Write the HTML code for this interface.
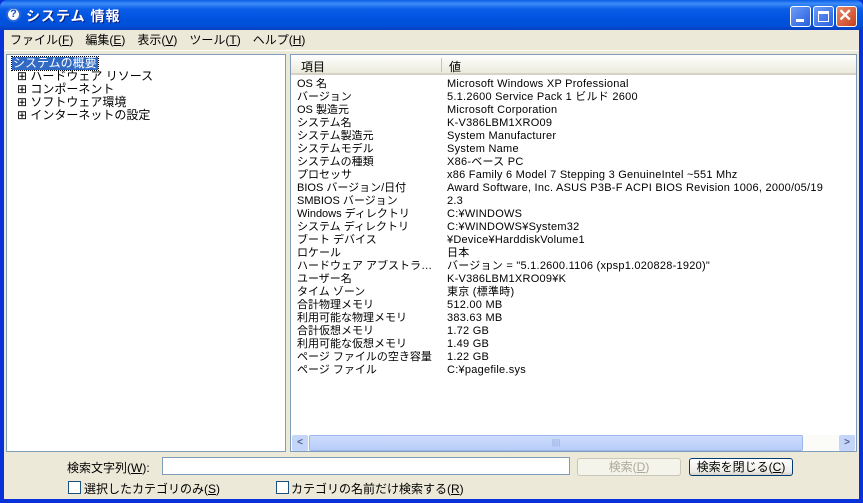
<!DOCTYPE html>
<html><head><meta charset="utf-8"><style>
*{margin:0;padding:0;box-sizing:border-box}
body{width:863px;height:503px;overflow:hidden;background:#0831d9;font-family:"Liberation Sans","Noto Sans CJK JP",sans-serif;font-size:11px;color:#000;position:relative}
.abs{position:absolute}
#title{left:0;top:0;width:863px;height:30px;background:linear-gradient(#0a5de8 0%,#3d8cf7 12%,#0a5ee8 30%,#0053e0 60%,#0050d8 85%,#0a3fc0 100%);border-radius:7px 7px 0 0}
#ttext{left:26px;top:6px;color:#fff;font-weight:bold;font-size:14px;letter-spacing:1px;text-shadow:1px 1px #0a1e80}
#ticon{left:6px;top:7px;width:15px;height:15px;border-radius:50%;background:#fff;border:2px solid #2a6ad8;color:#1a4fc0;font-weight:bold;font-size:11px;text-align:center;line-height:11px}
.tb{top:6px;width:21px;height:21px;border:1px solid #fff;border-radius:3px;background:linear-gradient(135deg,#6d9bf5,#2860e0)}
#client{left:4px;top:30px;width:855px;height:469px;background:#ece9d8}
#menu{left:10px;top:31px;font-size:12px}
#menu span{margin-right:12px}
.pane{background:#fff;border:1px solid #7f9db9}
.row{position:absolute;left:0;height:13px;line-height:13px;white-space:nowrap}
.lab .row{width:146px;overflow:hidden;text-overflow:ellipsis}
.val .row{letter-spacing:0.25px}
</style></head><body>
<div id="title" class="abs"></div>
<div id="ticon" class="abs">?</div>
<div id="ttext" class="abs">システム 情報</div>
<div class="abs tb" style="left:790px"><div class="abs" style="left:5px;top:12px;width:8px;height:3px;background:#fff"></div></div>
<div class="abs tb" style="left:813px"><div class="abs" style="left:4px;top:4px;width:11px;height:11px;border:1px solid #fff;border-top-width:3px"></div></div>
<div class="abs tb" style="left:836px;background:linear-gradient(135deg,#e88a6a,#c8401c)"><div class="abs" style="left:1px;top:-1px;color:#fff;font-size:17px;font-weight:bold">✕</div></div>
<div id="client" class="abs"></div>
<div id="menu" class="abs"><span>ファイル(<u>F</u>)</span><span>編集(<u>E</u>)</span><span>表示(<u>V</u>)</span><span>ツール(<u>T</u>)</span><span>ヘルプ(<u>H</u>)</span></div>
<div class="abs" style="left:4px;top:50px;width:855px;height:1px;background:#fff"></div>
<div class="abs pane" style="left:6px;top:54px;width:280px;height:398px">
<div class="abs" style="left:5px;top:2px;background:#316ac5;color:#fff;padding:0 1px;font-size:12px;line-height:13px;outline:1px dotted #000">システムの概要</div>
<div class="abs" style="left:10px;top:15px;font-size:12px;line-height:13px">
<div>⊞ ハードウェア リソース</div><div>⊞ コンポーネント</div><div>⊞ ソフトウェア環境</div><div>⊞ インターネットの設定</div></div>
</div>
<div class="abs pane" style="left:290px;top:54px;width:567px;height:398px">
<div class="abs" style="left:0;top:0;width:565px;height:20px;background:linear-gradient(#fff,#ebeadb);border-bottom:2px solid #d6d3c4"></div>
<div class="abs" style="left:150px;top:3px;width:1px;height:14px;background:#c7c5b2"></div>
<div class="abs" style="left:10px;top:3px;font-size:12px">項目</div>
<div class="abs" style="left:158px;top:3px;font-size:12px">値</div>
<div class="abs lab" style="left:6px;top:23px">
<div class="row" style="top:0">OS 名</div><div class="row" style="top:13px">バージョン</div><div class="row" style="top:26px">OS 製造元</div><div class="row" style="top:39px">システム名</div><div class="row" style="top:52px">システム製造元</div><div class="row" style="top:65px">システムモデル</div><div class="row" style="top:78px">システムの種類</div><div class="row" style="top:91px">プロセッサ</div><div class="row" style="top:104px">BIOS バージョン/日付</div><div class="row" style="top:117px">SMBIOS バージョン</div><div class="row" style="top:130px">Windows ディレクトリ</div><div class="row" style="top:143px">システム ディレクトリ</div><div class="row" style="top:156px">ブート デバイス</div><div class="row" style="top:169px">ロケール</div><div class="row" style="top:182px">ハードウェア アブストラクション レイヤ</div><div class="row" style="top:195px">ユーザー名</div><div class="row" style="top:208px">タイム ゾーン</div><div class="row" style="top:221px">合計物理メモリ</div><div class="row" style="top:234px">利用可能な物理メモリ</div><div class="row" style="top:247px">合計仮想メモリ</div><div class="row" style="top:260px">利用可能な仮想メモリ</div><div class="row" style="top:273px">ページ ファイルの空き容量</div><div class="row" style="top:286px">ページ ファイル</div>
</div>
<div class="abs val" style="left:156px;top:23px">
<div class="row" style="top:0">Microsoft Windows XP Professional</div><div class="row" style="top:13px">5.1.2600 Service Pack 1 ビルド 2600</div><div class="row" style="top:26px">Microsoft Corporation</div><div class="row" style="top:39px">K-V386LBM1XRO09</div><div class="row" style="top:52px">System Manufacturer</div><div class="row" style="top:65px">System Name</div><div class="row" style="top:78px">X86-ベース PC</div><div class="row" style="top:91px">x86 Family 6 Model 7 Stepping 3 GenuineIntel ~551 Mhz</div><div class="row" style="top:104px">Award Software, Inc. ASUS P3B-F ACPI BIOS Revision 1006, 2000/05/19</div><div class="row" style="top:117px">2.3</div><div class="row" style="top:130px">C:¥WINDOWS</div><div class="row" style="top:143px">C:¥WINDOWS¥System32</div><div class="row" style="top:156px">¥Device¥HarddiskVolume1</div><div class="row" style="top:169px">日本</div><div class="row" style="top:182px">バージョン = "5.1.2600.1106 (xpsp1.020828-1920)"</div><div class="row" style="top:195px">K-V386LBM1XRO09¥K</div><div class="row" style="top:208px">東京 (標準時)</div><div class="row" style="top:221px">512.00 MB</div><div class="row" style="top:234px">383.63 MB</div><div class="row" style="top:247px">1.72 GB</div><div class="row" style="top:260px">1.49 GB</div><div class="row" style="top:273px">1.22 GB</div><div class="row" style="top:286px">C:¥pagefile.sys</div>
</div>
<div class="abs" style="left:0;top:380px;width:565px;height:16px;background:#fbfbf8">
<div class="abs" style="left:1px;top:0;width:16px;height:16px;background:#c5d5fa;border-radius:2px;color:#4d6185;font-size:10px;text-align:center;line-height:16px;font-weight:bold">&lt;</div>
<div class="abs" style="left:18px;top:0;width:494px;height:16px;background:linear-gradient(#cddcfc,#b8cdf8);border:1px solid #9db6ee;border-radius:2px;color:#8aa3d8;text-align:center;font-size:8px;line-height:14px">||||</div>
<div class="abs" style="left:548px;top:0;width:16px;height:16px;background:#c5d5fa;border-radius:2px;color:#4d6185;font-size:10px;text-align:center;line-height:16px;font-weight:bold">&gt;</div>
</div>
</div>
<div class="abs" style="left:67px;top:459px;font-size:12px">検索文字列(<u>W</u>):</div>
<div class="abs" style="left:162px;top:457px;width:408px;height:18px;background:#fff;border:1px solid #7f9db9"></div>
<div class="abs" style="left:577px;top:458px;width:104px;height:18px;border:1px solid #c9c7ba;border-radius:3px;background:#f5f4ea;color:#aca899;text-align:center;line-height:16px;font-size:12px">検索(<u>D</u>)</div>
<div class="abs" style="left:689px;top:458px;width:104px;height:18px;border:1px solid #003c74;border-radius:3px;background:linear-gradient(#fff,#ecebe6 80%,#d6d0c5);text-align:center;line-height:16px;font-size:12px">検索を閉じる(<u>C</u>)</div>
<div class="abs" style="left:68px;top:481px;width:13px;height:13px;border:1px solid #1c5180;background:#fff"></div>
<div class="abs" style="left:84px;top:480px;font-size:12px">選択したカテゴリのみ(<u>S</u>)</div>
<div class="abs" style="left:276px;top:481px;width:13px;height:13px;border:1px solid #1c5180;background:#fff"></div>
<div class="abs" style="left:291px;top:480px;font-size:12px">カテゴリの名前だけ検索する(<u>R</u>)</div>
</body></html>
